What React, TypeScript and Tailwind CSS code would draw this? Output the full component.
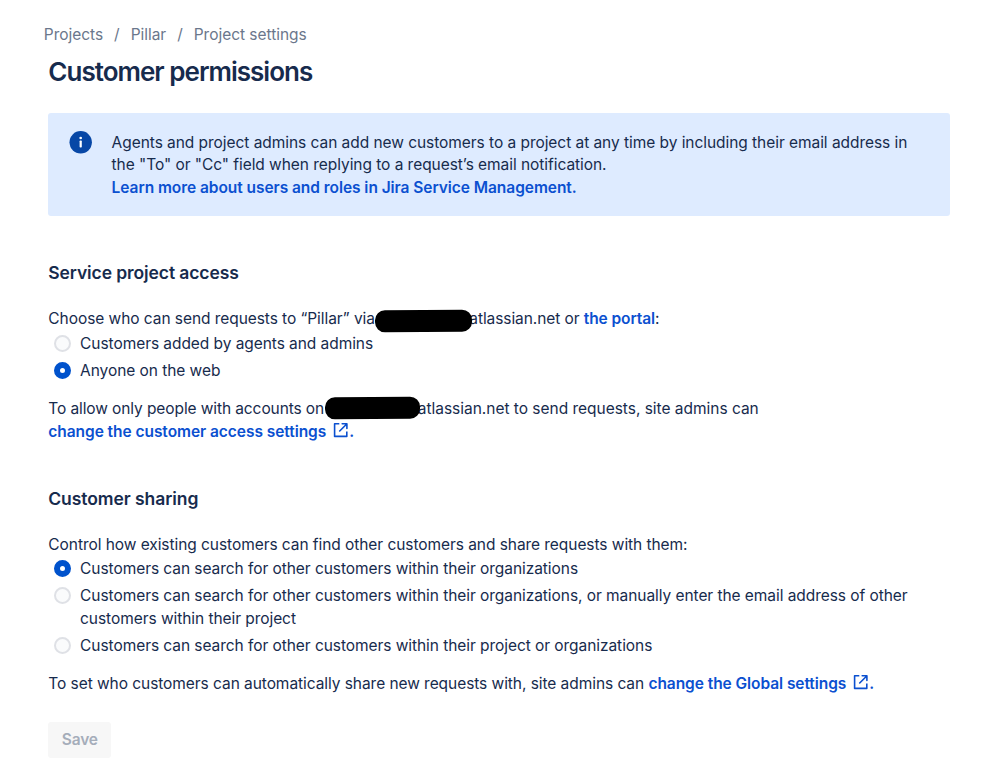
import type { ReactNode } from "react";

function InfoIcon() {
  return (
    <svg className="shrink-0" width="23" height="23" viewBox="0 0 23 23" aria-hidden="true">
      <circle cx="11.7" cy="11.3" r="11.2" fill="#0747a6" />
      <circle cx="11.7" cy="7" r="1.35" fill="#fff" />
      <rect x="10.6" y="9.4" width="2.2" height="7.2" rx="0.8" fill="#fff" />
    </svg>
  );
}

function ExternalIcon() {
  return (
    <svg
      className="ml-[7px] inline-block align-[-1px]"
      width="16"
      height="16"
      viewBox="0 0 16 16"
      fill="none"
      stroke="currentColor"
      strokeWidth="1.6"
      strokeLinejoin="round"
      aria-hidden="true"
    >
      <path d="M6.3 1.8H1.6V14.4H13.8V9.6" />
      <path d="M9.2 1.8H13.9V6.5M13.5 2.2 6.7 9" strokeLinecap="round" />
    </svg>
  );
}

function Link({ children }: { children: ReactNode }) {
  return (
    <a href="#" className="font-semibold text-[#0b50d0]">
      {children}
    </a>
  );
}

// Blacked-out site name, drawn over the text on both sides of it
function Redacted({ className }: { className: string }) {
  return (
    <span className={`relative h-[22px] shrink-0 ${className}`}>
      <span className="absolute inset-y-0 left-0 -right-[2px] -rotate-[0.4deg] rounded-[10px] bg-black" />
    </span>
  );
}

type OptionProps = { name: string; checked?: boolean; children: ReactNode };

function Option({ name, checked, children }: OptionProps) {
  return (
    <label className="flex items-start tracking-[-0.06px]">
      <span className="relative ml-[5.4px] mr-[9.4px] mt-[2px] flex size-[17px] shrink-0">
        <input type="radio" name={name} defaultChecked={checked} className="peer sr-only" />
        <span className="size-[17px] rounded-full border-2 border-[#dfe1e6] bg-[#fafbfc] peer-checked:border-[6.5px] peer-checked:border-[#0052cc] peer-checked:bg-white" />
      </span>
      <span>{children}</span>
    </label>
  );
}

export default function App() {
  return (
    <main className="h-[769px] overflow-hidden bg-white pl-[48.3px] pt-[23.5px] font-['Inter',sans-serif] text-[15.5px] leading-[22.6px] tracking-[-0.05px] text-[#172b4d]">
      <nav className="-ml-[4.5px] flex gap-[11px] tracking-[-0.03px] text-[#6b778c]">
        <span>Projects</span>
        <span>/</span>
        <span>Pillar</span>
        <span>/</span>
        <span>Project settings</span>
      </nav>
      <h1 className="mt-[10px] text-[26px] font-semibold leading-[32px] tracking-[-0.98px]">Customer permissions</h1>

      <section className="mt-[24.9px] flex h-[103.5px] w-[902px] rounded-[3px] bg-[#deebff] pl-[20.3px] pt-[18px]">
        <InfoIcon />
        <p className="ml-[20px] whitespace-nowrap pt-[0.9px]">
          Agents and project admins can add new customers to a project at any time by including their email address in
          <br />
          the "To" or "Cc" field when replying to a request’s email notification.
          <br />
          <Link>Learn more about users and roles in Jira Service Management.</Link>
        </p>
      </section>

      <section className="mt-[45px]">
        <h2 className="text-[17.5px] font-semibold leading-[24px] tracking-[-0.1px]">Service project access</h2>
        <div className="mt-[22.5px] flex items-center">
          <span className="w-[326.5px] whitespace-nowrap tracking-[-0.06px]">
            Choose who can send requests to “Pillar” via
          </span>
          <Redacted className="top-[2px] w-[94.5px]" />
          <span className="tracking-[-0.08px]">
            atlassian.net or <Link>the portal</Link>:
          </span>
        </div>
        <div className="mt-[2px] flex flex-col gap-[4.4px]">
          <Option name="access">Customers added by agents and admins</Option>
          <Option name="access" checked>
            Anyone on the web
          </Option>
        </div>
        <div className="mt-[16px] flex items-center">
          <span className="w-[276.5px] whitespace-nowrap tracking-[-0.1px]">To allow only people with accounts on</span>
          <Redacted className="-top-[1.5px] w-[93px]" />
          <span className="tracking-[-0.02px]">atlassian.net to send requests, site admins can</span>
        </div>
        <p>
          <Link>
            change the customer access settings
            <ExternalIcon />.
          </Link>
        </p>
      </section>

      <section className="mt-[43.6px]">
        <h2 className="text-[17.5px] font-semibold leading-[24px] tracking-[-0.07px]">Customer sharing</h2>
        <p className="mt-[22.6px] tracking-[-0.06px]">
          Control how existing customers can find other customers and share requests with them:
        </p>
        <div className="mt-[2px] flex flex-col gap-[4.4px]">
          <Option name="sharing" checked>
            Customers can search for other customers within their organizations
          </Option>
          <Option name="sharing">
            Customers can search for other customers within their organizations, or manually enter the email address of other
            <br />
            customers within their project
          </Option>
          <Option name="sharing">
            Customers can search for other customers within their project or organizations
          </Option>
        </div>
        <p className="mt-[16px] tracking-[-0.06px]">
          To set who customers can automatically share new requests with, site admins can{" "}
          <Link>
            change the Global settings
            <ExternalIcon />.
          </Link>
        </p>
      </section>

      <button
        type="button"
        disabled
        className="mt-[26.3px] h-[36px] w-[63px] rounded-[3px] bg-[#f7f7f7] font-semibold tracking-[-0.2px] text-[#a5adba]"
      >
        Save
      </button>
    </main>
  );
}
